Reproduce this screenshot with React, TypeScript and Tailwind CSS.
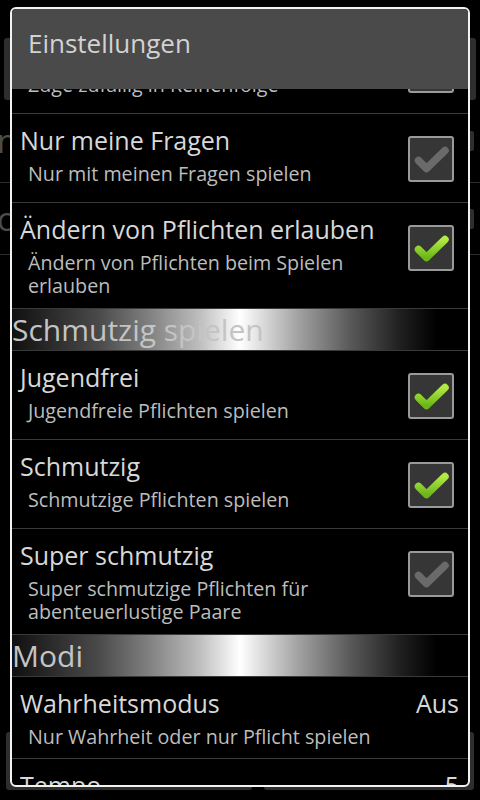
import React from 'react';

const font = "font-['Open_Sans','DejaVu_Sans',sans-serif]";

function CheckBox({ on }: { on: boolean }) {
  return (
    <div className="w-[46px] h-[46px] shrink-0 rounded-[3px] border-2 border-[#9a9a9a] bg-[#363636] flex items-center justify-center">
      <svg width="42" height="42" viewBox="0 0 42 42">
        <defs>
          <linearGradient id="chk-green" x1="0" y1="0" x2="0" y2="1">
            <stop offset="0" stopColor="#b2ea44" />
            <stop offset="1" stopColor="#6cb61a" />
          </linearGradient>
        </defs>
        <path
          d="M8.5 22.5 L16.5 30.5 L35 12.5"
          fill="none"
          stroke={on ? 'url(#chk-green)' : '#6a6a6a'}
          strokeWidth={7.5}
          strokeLinecap="round"
          strokeLinejoin="round"
        />
      </svg>
    </div>
  );
}

interface PrefProps {
  title: string;
  summary: string;
  height: string;
  checked?: boolean;
  value?: string;
}

function Pref({ title, summary, height, checked, value }: PrefProps) {
  const hasBox = checked !== undefined;
  return (
    <div className={`flex border-b border-[#3a3a3a] pl-[8px] ${hasBox ? 'pr-0' : 'pr-[9px]'} ${height}`}>
      <div className="flex-1 pt-[11px]">
        <div className="flex justify-between text-[25px] leading-[30px] text-[#d8d8d8]">
          <span>{title}</span>
          {value && <span>{value}</span>}
        </div>
        <div className="mt-[7px] pl-[8px] text-[19.7px] leading-[23px] text-[#bdbdbd]">{summary}</div>
      </div>
      {hasBox && (
        <div className="pl-[12px] pr-[14px] pt-[22px]">
          <CheckBox on={checked} />
        </div>
      )}
    </div>
  );
}

function Header({ label }: { label: string }) {
  return (
    <div className="h-[42px] border-b border-[#3a3a3a] bg-[linear-gradient(to_right,#101010_0%,#4a4a4a_19%,#808080_30%,#bdbdbd_41%,#ffffff_50%,#a0a0a0_63%,#5a5a5a_74%,#202020_85%,#000000_93%)] text-[30px] leading-[41px] text-[#c4c4c4]">
      {label}
    </div>
  );
}

export default function App() {
  return (
    <div className={`relative w-[480px] h-[800px] bg-black overflow-hidden ${font}`}>
      {/* Dimmed screen behind the dialog */}
      <div className="flex flex-col h-full pt-[38px] pb-[10px]">
        <div className="mx-[4px] h-[62px] rounded-[3px] bg-[#2e2e2e]" />
        <div className="flex items-center justify-between h-[83px] border-b border-[#2c2c2c] pr-[6px]">
          <span className="-ml-[3px] text-[32px] text-[#4c4c4c]">neue Fragen</span>
          <div className="w-[12px] h-[20px] rounded-[2px] bg-[#2e2e2e]" />
        </div>
        <div className="flex items-center justify-between h-[72px] border-b border-[#2c2c2c] pr-[6px]">
          <span className="-ml-[3px] text-[32px] text-[#4c4c4c]">c</span>
          <div className="w-[12px] h-[20px] rounded-[2px] bg-[#2e2e2e]" />
        </div>
        <div className="flex-1" />
        <div className="flex gap-[12px] px-[6px] h-[58px]">
          <div className="w-[246px] rounded-[3px] bg-[#2e2e2e]" />
          <div className="flex-1 rounded-[3px] bg-[#2e2e2e]" />
        </div>
      </div>

      {/* Settings dialog */}
      <div className="absolute left-[10px] top-[7px] w-[460px] h-[780px] rounded-[6px] border-2 border-[#f2f2f2] bg-black overflow-hidden flex flex-col">
        <div className="h-[80px] shrink-0 bg-[#4a4a4a] pl-[16px] pt-[16px] text-[26px] leading-[36px] text-[#d2d2d2]">
          Einstellungen
        </div>
        <div className="flex-1 overflow-hidden">
          <div className="-mt-[64px]">
            <Pref title="Züge zufällig" summary="Züge zufällig in Reihenfolge" height="h-[89px]" checked={false} />
            <Pref title="Nur meine Fragen" summary="Nur mit meinen Fragen spielen" height="h-[89px]" checked={false} />
            <Pref
              title="Ändern von Pflichten erlauben"
              summary="Ändern von Pflichten beim Spielen erlauben"
              height="h-[106px]"
              checked={true}
            />
            <Header label="Schmutzig spielen" />
            <Pref title="Jugendfrei" summary="Jugendfreie Pflichten spielen" height="h-[89px]" checked={true} />
            <Pref title="Schmutzig" summary="Schmutzige Pflichten spielen" height="h-[89px]" checked={true} />
            <Pref
              title="Super schmutzig"
              summary="Super schmutzige Pflichten für abenteuerlustige Paare"
              height="h-[106px]"
              checked={false}
            />
            <Header label="Modi" />
            <Pref title="Wahrheitsmodus" summary="Nur Wahrheit oder nur Pflicht spielen" height="h-[82px]" value="Aus" />
            <Pref title="Tempo" summary="Zeit pro Runde" height="h-[89px]" value="5" />
          </div>
        </div>
      </div>
    </div>
  );
}
